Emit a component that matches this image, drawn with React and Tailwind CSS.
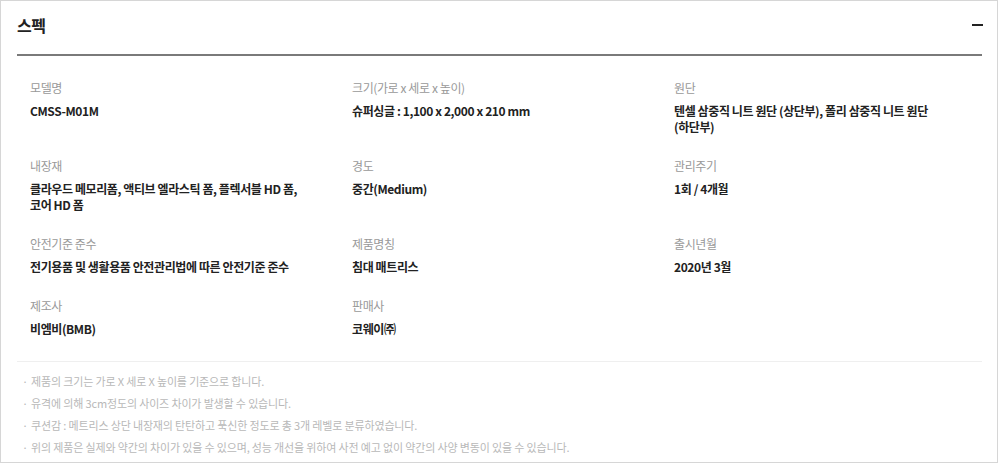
import React from "react"

const specs = [
  { label: "모델명", value: ["CMSS-M01M"] },
  { label: "크기(가로 x 세로 x 높이)", value: ["슈퍼싱글 : 1,100 x 2,000 x 210 mm"] },
  { label: "원단", value: ["텐셀 삼중직 니트 원단 (상단부), 폴리 삼중직 니트 원단", "(하단부)"] },
  { label: "내장재", value: ["클라우드 메모리폼, 액티브 엘라스틱 폼, 플렉서블 HD 폼,", "코어 HD 폼"] },
  { label: "경도", value: ["중간(Medium)"] },
  { label: "관리주기", value: ["1회 / 4개월"] },
  { label: "안전기준 준수", value: ["전기용품 및 생활용품 안전관리법에 따른 안전기준 준수"] },
  { label: "제품명칭", value: ["침대 매트리스"] },
  { label: "출시년월", value: ["2020년 3월"] },
  { label: "제조사", value: ["비엠비(BMB)"] },
  { label: "판매사", value: ["코웨이㈜"] },
]

const notes = [
  "제품의 크기는 가로 X 세로 X 높이를 기준으로 합니다.",
  "유격에 의해 3cm정도의 사이즈 차이가 발생할 수 있습니다.",
  "쿠션감 : 메트리스 상단 내장재의 탄탄하고 푹신한 정도로 총 3개 레벨로 분류하였습니다.",
  "위의 제품은 실제와 약간의 차이가 있을 수 있으며, 성능 개선을 위하여 사전 예고 없이 약간의 사양 변동이 있을 수 있습니다.",
]

export default function App() {
  return (
    <div className="w-[998px] h-[463px] border border-[#d6d6d6] bg-white pl-[16px] pr-[15px] font-['Noto_Sans_CJK_KR',sans-serif] tracking-[-0.4px] overflow-hidden">
      <div className="flex items-center justify-between h-[48px]">
        <h2 className="text-[16px] font-bold text-[#222] leading-none">스펙</h2>
        <span className="block w-[11px] h-[2px] bg-[#222] mr-[-1px]" />
      </div>
      <div className="h-[2px] bg-[#7a7a7a] mt-[5px]" />

      <div className="grid grid-cols-[322px_322px_1fr] gap-y-[22px] pl-[13px] pt-[23px] pb-[24px]">
        {specs.map((s) => (
          <div key={s.label}>
            <p className="text-[12px] leading-[18px] text-[#999]">{s.label}</p>
            <div className="mt-[6px] text-[12px] leading-[16px] font-bold text-[#222]">
              {s.value.map((v) => (
                <p key={v}>{v}</p>
              ))}
            </div>
          </div>
        ))}
      </div>

      <div className="border-t border-[#efefef] pt-[8px] pl-[5px]">
        {notes.map((n) => (
          <p key={n} className="text-[11px] leading-[22px] text-[#b8b8b8] tracking-[-0.15px]">
            <span className="mr-[3px]">·</span>
            {n}
          </p>
        ))}
      </div>
    </div>
  )
}
